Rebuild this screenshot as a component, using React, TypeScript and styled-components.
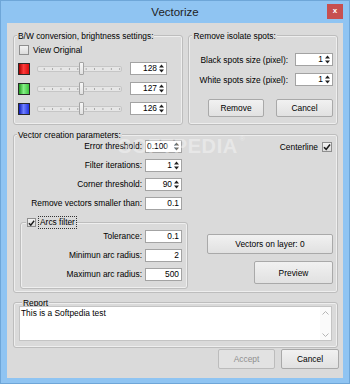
import React from 'react';
import styled, { createGlobalStyle } from 'styled-components';

const GlobalStyle = createGlobalStyle`
  html, body {
    margin: 0;
    padding: 0;
    background: #8fc4f2;
  }
  body {
    font-family: "Liberation Sans", Arial, sans-serif;
    font-size: 8.4px;
    color: #000;
  }
`;

const Window = styled.div`
  width: 350px;
  height: 384px;
  box-sizing: border-box;
  background: #8fc4f2;
  border: 1px solid #6ea6d8;
  padding: 0 6px 5px;
  display: flex;
  flex-direction: column;
`;

const TitleBar = styled.div`
  height: 22px;
  display: grid;
  grid-template-columns: 1fr auto 1fr;
  align-items: start;
`;

const Title = styled.div`
  grid-column: 2;
  font-size: 11.5px;
  line-height: 23px;
  color: #222;
`;

const CloseButton = styled.div`
  grid-column: 3;
  justify-self: end;
  margin-top: 3px;
  width: 16px;
  height: 15px;
  background: #c75050;
  color: #fff;
  font-weight: bold;
  font-size: 8px;
  line-height: 14px;
  text-align: center;
`;

const Client = styled.div`
  position: relative;
  flex: 1;
  background: #dadada;
  padding: 12px 5px 0 6px;
  display: flex;
  flex-direction: column;
`;

const Watermark = styled.div`
  position: absolute;
  left: 111px;
  top: 112px;
  font-size: 20px;
  font-weight: bold;
  letter-spacing: 0.6px;
  color: rgba(255, 255, 255, 0.38);
  pointer-events: none;

  sup {
    font-size: 7px;
    font-weight: normal;
    vertical-align: top;
    margin-left: 2px;
  }
`;

const TopRow = styled.div`
  display: flex;
  gap: 5px;
`;

const GroupBox = styled.div<{ $w?: number; $h: number; $pad?: string }>`
  box-sizing: border-box;
  width: ${p => (p.$w ? `${p.$w}px` : 'auto')};
  height: ${p => p.$h}px;
  border: 1px solid #bdbdbd;
  border-radius: 3px;
  box-shadow: inset 0 0 0 1px rgba(255, 255, 255, 0.55);
  padding: ${p => p.$pad || '0'};
  display: flex;
  flex-direction: column;
`;

const Caption = styled.div<{ $mb?: number; $ml?: number }>`
  align-self: flex-start;
  display: flex;
  align-items: center;
  gap: 3px;
  margin: -6px 0 ${p => p.$mb ?? 0}px ${p => p.$ml ?? 3}px;
  padding: 0 1px;
  line-height: 12px;
  background: #dadada;
  white-space: nowrap;
`;

const CheckRow = styled.label`
  display: flex;
  align-items: center;
  gap: 4px;
  height: 12px;
  margin: 2px 0 0 5px;
`;

const Check = styled.span<{ $size?: number }>`
  box-sizing: border-box;
  width: ${p => p.$size ?? 10}px;
  height: ${p => p.$size ?? 10}px;
  border: 1px solid #8e8e8e;
  background: linear-gradient(#f3f3f3, #dcdcdc);
  display: inline-flex;
  align-items: center;
  justify-content: center;
  flex-shrink: 0;
`;

const ColorRows = styled.div`
  display: flex;
  flex-direction: column;
  gap: 7px;
  margin: 6px 0 0 4px;
`;

const ColorRow = styled.div`
  display: flex;
  align-items: center;
  height: 13px;
`;

const Swatch = styled.div<{ $from: string; $mid: string; $to: string }>`
  box-sizing: border-box;
  width: 12px;
  height: 12px;
  border: 1px solid #2a2a2a;
  background: linear-gradient(90deg, ${p => p.$from}, ${p => p.$mid} 45%, ${p => p.$to});
  margin-right: 7px;
`;

const Slider = styled.div`
  position: relative;
  width: 85px;
  height: 13px;
  margin-right: 8px;
`;

const Groove = styled.div`
  box-sizing: border-box;
  height: 6px;
  margin-top: 4px;
  border: 1px solid #c6c6c6;
  border-radius: 2px;
  background-color: #e6e6e6;
  background-image: radial-gradient(circle, #a6a6a6 0.7px, transparent 1px);
  background-size: 8.4px 100%;
  background-position: 2px center;
`;

const Thumb = styled.div`
  position: absolute;
  top: 0;
  box-sizing: border-box;
  width: 5px;
  height: 13px;
  border: 1px solid #a4a4a4;
  border-radius: 1px;
  background: linear-gradient(#f6f6f6, #e2e2e2);
`;

const SpinBox = styled.div<{ $w: number; $align?: string }>`
  box-sizing: border-box;
  width: ${p => p.$w}px;
  height: 13px;
  border: 1px solid #a3a3a3;
  background: #fff;
  display: flex;
  align-items: center;

  span {
    flex: 1;
    text-align: ${p => p.$align || 'right'};
    padding: 0 2px 0 1px;
    line-height: 11px;
    white-space: nowrap;
  }

  svg {
    margin-right: 2px;
    flex-shrink: 0;
  }
`;

const SpotRows = styled.div`
  display: flex;
  flex-direction: column;
  gap: 7px;
  margin-top: 11px;
  padding-right: 4px;
`;

const SpotRow = styled.div`
  display: flex;
  align-items: center;
  gap: 7px;

  label {
    flex: 1;
    text-align: right;
    white-space: nowrap;
  }
`;

const ButtonRow = styled.div<{ $gap: number; $mt: number }>`
  display: flex;
  justify-content: flex-end;
  gap: ${p => p.$gap}px;
  margin-top: ${p => p.$mt}px;
`;

const Button = styled.div<{ $w: number; $h?: number; $disabled?: boolean }>`
  box-sizing: border-box;
  width: ${p => p.$w}px;
  height: ${p => p.$h ?? 20}px;
  border: 1px solid ${p => (p.$disabled ? '#bcbcbc' : '#a9a9a9')};
  border-radius: 2px;
  background: ${p => (p.$disabled ? '#e2e2e2' : 'linear-gradient(#f1f1f1, #e1e1e1)')};
  color: ${p => (p.$disabled ? '#8f8f8f' : '#000')};
  display: flex;
  align-items: center;
  justify-content: center;
  white-space: nowrap;
`;

const VectorBody = styled.div`
  display: flex;
`;

const LeftCol = styled.div`
  width: 174px;
  display: flex;
  flex-direction: column;
`;

const ParamGrid = styled.div<{ $label: number }>`
  display: grid;
  grid-template-columns: ${p => p.$label}px 37px;
  column-gap: 3px;
  row-gap: 6px;
  align-items: center;

  label {
    text-align: right;
    white-space: nowrap;
    line-height: 13px;
  }
`;

const FocusLabel = styled.span`
  outline: 1px dotted #333;
  outline-offset: 0;
  padding: 0 1px;
  line-height: 11px;
`;

const RightCol = styled.div`
  flex: 1;
  display: flex;
  flex-direction: column;
  align-items: flex-end;
  padding-right: 4px;
`;

const CenterlineRow = styled.label`
  display: flex;
  align-items: center;
  gap: 4px;
  margin-top: 2px;
  margin-right: 1px;
`;

const Report = styled.div`
  box-sizing: border-box;
  height: 35px;
  border: 1px solid #c4c4c4;
  background: #fff;
  display: flex;
`;

const ReportText = styled.div`
  flex: 1;
  padding: 1px 1px;
  line-height: 11px;
`;

const ScrollBar = styled.div`
  width: 11px;
  display: flex;
  flex-direction: column;
  justify-content: space-between;
  align-items: center;
  padding: 4px 0 3px;
  background: #fafafa;
`;

const Arrows = () => (
  <svg width="5" height="9" viewBox="0 0 5 9">
    <path d="M2.5 0.5 L5 3.5 L0 3.5 Z" fill="#222" />
    <path d="M0 5.5 L5 5.5 L2.5 8.5 Z" fill="#222" />
  </svg>
);

const Tick = () => (
  <svg width="8" height="8" viewBox="0 0 8 8">
    <path d="M1 4.2 L3.2 6.4 L7 1.4" fill="none" stroke="#1a1a1a" strokeWidth="1.6" />
  </svg>
);

const Chevron = ({ up }: { up?: boolean }) => (
  <svg width="7" height="4" viewBox="0 0 7 4">
    <path d={up ? 'M0.5 3.5 L3.5 0.5 L6.5 3.5' : 'M0.5 0.5 L3.5 3.5 L6.5 0.5'} fill="none" stroke="#b5b5b5" strokeWidth="1" />
  </svg>
);

const channels = [
  { value: 128, from: '#a30000', mid: '#ff3a3a', to: '#d80e0e' },
  { value: 127, from: '#1f9a1f', mid: '#86f086', to: '#3ec43e' },
  { value: 126, from: '#0c1ab8', mid: '#6f80ff', to: '#2233e0' },
];

export default function App() {
  return (
    <>
      <GlobalStyle />
      <Window>
        <TitleBar>
          <Title>Vectorize</Title>
          <CloseButton>x</CloseButton>
        </TitleBar>
        <Client>
          <TopRow>
            <GroupBox $w={171} $h={90}>
              <Caption>B/W conversion, brightness settings:</Caption>
              <CheckRow>
                <Check />
                View Original
              </CheckRow>
              <ColorRows>
                {channels.map(ch => (
                  <ColorRow key={ch.value}>
                    <Swatch $from={ch.from} $mid={ch.mid} $to={ch.to} />
                    <Slider>
                      <Groove />
                      <Thumb style={{ left: `${(ch.value / 255) * 80 + 2}px` }} />
                    </Slider>
                    <SpinBox $w={37}>
                      <span>{ch.value}</span>
                      <Arrows />
                    </SpinBox>
                  </ColorRow>
                ))}
              </ColorRows>
            </GroupBox>
            <GroupBox $w={150} $h={90}>
              <Caption>Remove isolate spots:</Caption>
              <SpotRows>
                <SpotRow>
                  <label>Black spots size (pixel):</label>
                  <SpinBox $w={38}>
                    <span>1</span>
                    <Arrows />
                  </SpinBox>
                </SpotRow>
                <SpotRow>
                  <label>White spots size (pixel):</label>
                  <SpinBox $w={38}>
                    <span>1</span>
                    <Arrows />
                  </SpinBox>
                </SpotRow>
              </SpotRows>
              <ButtonRow $gap={12} $mt={13} style={{ paddingRight: 4 }}>
                <Button $w={56} $h={18}>Remove</Button>
                <Button $w={57} $h={18}>Cancel</Button>
              </ButtonRow>
            </GroupBox>
          </TopRow>

          <GroupBox $h={159} style={{ marginTop: 9 }}>
            <Caption $mb={-1}>Vector creation parameters:</Caption>
            <VectorBody>
              <LeftCol>
                <ParamGrid $label={128}>
                  <label>Error threshold:</label>
                  <SpinBox $w={37} $align="left">
                    <span>0.100</span>
                    <Arrows />
                  </SpinBox>
                  <label>Filter iterations:</label>
                  <SpinBox $w={37}>
                    <span>1</span>
                    <Arrows />
                  </SpinBox>
                  <label>Corner threshold:</label>
                  <SpinBox $w={37}>
                    <span>90</span>
                    <Arrows />
                  </SpinBox>
                  <label>Remove vectors smaller than:</label>
                  <SpinBox $w={37}>
                    <span>0.1</span>
                  </SpinBox>
                </ParamGrid>
                <GroupBox $h={67} $pad="0 0 0 0" style={{ marginTop: 12, marginLeft: 6 }}>
                  <Caption $ml={5} $mb={2}>
                    <Check $size={9}>
                      <Tick />
                    </Check>
                    <FocusLabel>Arcs filter</FocusLabel>
                  </Caption>
                  <ParamGrid $label={121}>
                    <label>Tolerance:</label>
                    <SpinBox $w={37}>
                      <span>0.1</span>
                    </SpinBox>
                    <label>Minimun arc radius:</label>
                    <SpinBox $w={37}>
                      <span>2</span>
                    </SpinBox>
                    <label>Maximun arc radius:</label>
                    <SpinBox $w={37}>
                      <span>500</span>
                    </SpinBox>
                  </ParamGrid>
                </GroupBox>
              </LeftCol>
              <RightCol>
                <CenterlineRow>
                  Centerline
                  <Check>
                    <Tick />
                  </Check>
                </CenterlineRow>
                <Button $w={126} style={{ marginTop: 82 }}>Vectors on layer: 0</Button>
                <Button $w={79} $h={23} style={{ marginTop: 7 }}>Preview</Button>
              </RightCol>
            </VectorBody>
          </GroupBox>

          <GroupBox $h={46} $pad="0 5px" style={{ marginTop: 9 }}>
            <Caption $mb={-3}>Report</Caption>
            <Report>
              <ReportText>This is a Softpedia test</ReportText>
              <ScrollBar>
                <Chevron up />
                <Chevron />
              </ScrollBar>
            </Report>
          </GroupBox>

          <ButtonRow $gap={6} $mt={1} style={{ marginRight: -1 }}>
            <Button $w={57} $disabled>Accept</Button>
            <Button $w={58}>Cancel</Button>
          </ButtonRow>

          <Watermark>
            SOFTPEDIA<sup>®</sup>
          </Watermark>
        </Client>
      </Window>
    </>
  );
}
